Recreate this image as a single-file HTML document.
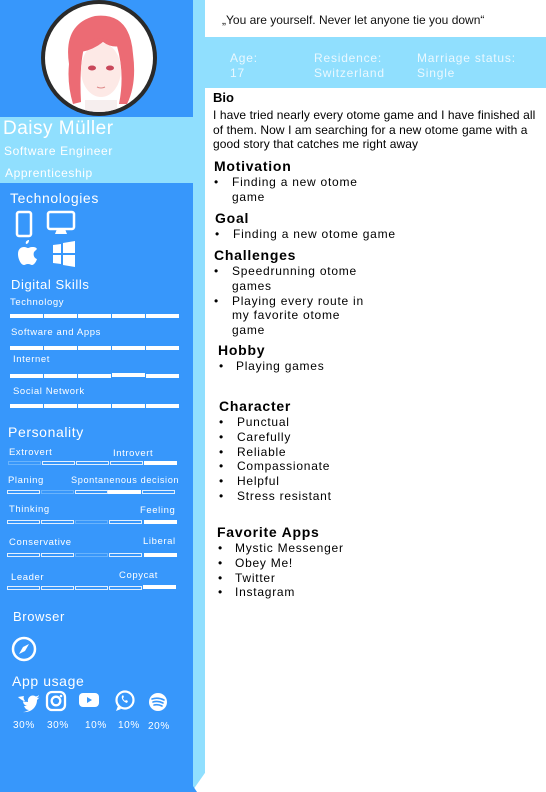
<!DOCTYPE html>
<html><head><meta charset="utf-8"><style>
*{margin:0;padding:0;box-sizing:border-box}
body{width:546px;height:792px;position:relative;overflow:hidden;background:#fff;font-family:"Liberation Sans",sans-serif}
.a{position:absolute;white-space:nowrap}
.w{color:#fff;letter-spacing:.6px}
.k{color:#000;letter-spacing:.75px}
.seg{position:absolute;height:4px;width:33px;background:#fff}
.o{background:#3797fb;border:1px solid #fff;opacity:.85}
.f{background:#fff}
.n{border:1px solid #69b3fc;background:#3797fb}
.s{font-size:9.5px}
</style></head><body>
<div class="a" style="left:0;top:0;width:193px;height:792px;background:#3797fb"></div>
<div class="a" style="left:193px;top:0;width:12px;height:792px;background:#90dffe"></div>
<svg class="a" style="left:193px;top:770px" width="14" height="22"><polygon points="14,0 14,22 0,22 0,20" fill="#fff"/><polygon points="0,16 4,22 0,22" fill="#3797fb"/></svg>
<div class="a" style="left:0;top:117px;width:205px;height:66px;background:#90dffe"></div>
<div class="a" style="left:205px;top:37px;width:341px;height:51px;background:#90dffe"></div>
<div class="a" style="left:41px;top:0;width:116px;height:116px;border-radius:50%;background:#2a2a2a"></div>
<div class="a" style="left:45px;top:4px;width:108px;height:108px;border-radius:50%;background:#fff;overflow:hidden">
<svg width="108" height="108"><path d="M24 60 Q18 20 50 12 Q85 8 88 50 Q92 80 82 100 L74 100 Q80 70 72 42 Q60 35 40 40 Q34 60 36 98 L28 100 Q22 80 24 60Z" fill="#ec6b74"/><ellipse cx="56" cy="66" rx="20" ry="27" fill="#fde9e6"/><path d="M36 40 Q55 28 76 42 Q66 44 58 38 Q48 46 36 48Z" fill="#ec6b74"/><ellipse cx="47" cy="64" rx="4" ry="2.5" fill="#c9475a"/><ellipse cx="65" cy="64" rx="4" ry="2.5" fill="#c9475a"/><path d="M52 83 Q56 85 60 83" stroke="#d88" fill="none"/><rect x="40" y="96" width="32" height="12" fill="#f6eeee"/></svg></div>
<div class="a" style="left:3px;top:118px;font-size:19px;color:#fff;letter-spacing:.5px">Daisy Müller</div>
<div class="a w" style="left:4px;top:144px;font-size:12px">Software Engineer</div>
<div class="a w" style="left:5px;top:166px;font-size:12px">Apprenticeship</div>
<div class="a w" style="left:10px;top:190px;font-size:14px">Technologies</div>
<svg class="a" style="left:14px;top:210px" width="64" height="58" fill="#fff">
<rect x="3" y="2" width="14" height="24" rx="2" fill="none" stroke="#fff" stroke-width="2.5"/>
<rect x="34" y="2" width="26" height="17" rx="2" fill="none" stroke="#fff" stroke-width="2.5"/><path d="M43 19h8l2 5h-12z"/>
<path d="M12 34c2 0 3-2 3-4-2 0-4 2-3 4zM10 37c-3 0-6 2-6 7 0 5 3 11 6 11 1 0 2-1 4-1s3 1 4 1c2 0 4-3 5-6-3-1-4-4-3-7 1-1 2-2 3-3-1-2-3-2-5-2-2 0-3 1-4 1s-2-1-4-1z"/>
<path d="M39 35l8-1v9h-8zM49 33l12-2v12h-12zM39 45h8v9l-8-1zM49 45h12v12l-12-2z"/></svg>
<div class="a w" style="left:11px;top:277px;font-size:13px">Digital Skills</div>
<div class="a w s" style="left:10px;top:297px">Technology</div>
<div class="a w s" style="left:11px;top:327px">Software and Apps</div>
<div class="a w s" style="left:13px;top:354px">Internet</div>
<div class="a w s" style="left:13px;top:386px">Social Network</div>
<div class="a w" style="left:8px;top:424px;font-size:14px">Personality</div>
<div class="a w s" style="left:9px;top:447px">Extrovert</div><div class="a w s" style="left:113px;top:448px">Introvert</div>
<div class="a w s" style="left:8px;top:475px">Planing</div><div class="a w s" style="left:71px;top:475px;font-size:9.2px">Spontanenous decision</div>
<div class="a w s" style="left:9px;top:504px">Thinking</div><div class="a w s" style="left:140px;top:505px">Feeling</div>
<div class="a w s" style="left:9px;top:537px">Conservative</div><div class="a w s" style="left:143px;top:536px">Liberal</div>
<div class="a w s" style="left:11px;top:572px">Leader</div><div class="a w s" style="left:119px;top:570px">Copycat</div>
<div class="a w" style="left:13px;top:609px;font-size:13px">Browser</div>
<svg class="a" style="left:11px;top:636px" width="26" height="26"><circle cx="13" cy="13" r="11" fill="none" stroke="#fff" stroke-width="2.5"/><path d="M18 8l-4 7-6 3 4-7z" fill="#fff"/></svg>
<div class="a w" style="left:12px;top:673px;font-size:14px">App usage</div>
<svg class="a" style="left:16px;top:690px" width="156" height="24" fill="#fff">
<path d="M2 7c3 3 7 5 10 5-1-4 3-8 7-6 1 1 3 0 4-1 0 1-1 2-2 3 1 0 2 0 3-1-1 1-2 2-3 3 0 7-6 13-14 12 2 0 4-1 6-2-3 0-4-2-5-4 1 0 2 0 3 0-3-1-4-3-4-5 1 1 2 1 3 1-2-2-3-4-2-6z"/>
<rect x="31" y="2" width="18" height="18" rx="5" fill="none" stroke="#fff" stroke-width="2.3"/><circle cx="40" cy="11" r="4.3" fill="none" stroke="#fff" stroke-width="2.3"/><circle cx="45" cy="6" r="1.3"/>
<rect x="63" y="3" width="20" height="14" rx="4"/><path d="M71 7v6l5-3z" fill="#3797fb"/>
<circle cx="109" cy="10" r="8.5" fill="none" stroke="#fff" stroke-width="2.2"/><path d="M100 21l2-5 3 3z"/><path d="M106 6c-1 2 1 6 5 7l1-2-2-1-1 1c-1-1-2-2-2-3l1-1-1-2z"/>
<circle cx="142" cy="12" r="9"/><path d="M136 9q6-2 12 1M137 12q5-1.5 10 1M138 15q4-1 8 1" stroke="#3797fb" stroke-width="1.6" fill="none" stroke-linecap="round"/></svg>
<div class="a w" style="left:13px;top:720px;font-size:10px">30%</div>
<div class="a w" style="left:47px;top:720px;font-size:10px">30%</div>
<div class="a w" style="left:85px;top:720px;font-size:10px">10%</div>
<div class="a w" style="left:118px;top:720px;font-size:10px">10%</div>
<div class="a w" style="left:148px;top:721px;font-size:10px">20%</div>
<div class="a" style="left:222px;top:13px;font-size:12px;color:#111">„You are yourself. Never let anyone tie you down“</div>
<div class="a" style="left:230px;top:51px;font-size:12px;color:#eaf8ff;letter-spacing:.8px;line-height:15px">Age:<br>17</div>
<div class="a" style="left:314px;top:51px;font-size:12px;color:#eaf8ff;letter-spacing:.8px;line-height:15px">Residence:<br>Switzerland</div>
<div class="a" style="left:417px;top:51px;font-size:12px;color:#eaf8ff;letter-spacing:.8px;line-height:15px">Marriage status:<br>Single</div>
<div class="a" style="left:213px;top:90px;font-size:13px;font-weight:bold">Bio</div>
<div class="a" style="left:213px;top:108px;font-size:12px;line-height:14.5px;color:#000;letter-spacing:.08px">I have tried nearly every otome game and I have finished all<br>of them. Now I am searching for a new otome game with a<br>good story that catches me right away</div>
<div class="a k" style="left:214px;top:158px;font-size:14px;font-weight:bold">Motivation</div>
<div class="a k" style="left:214px;top:175px;font-size:12px;line-height:15px">•<br>&nbsp;</div><div class="a k" style="left:232px;top:175px;font-size:12px;line-height:15px">Finding a new otome<br>game</div>
<div class="a k" style="left:215px;top:210px;font-size:14px;font-weight:bold">Goal</div>
<div class="a k" style="left:215px;top:227px;font-size:12px">•</div><div class="a k" style="left:233px;top:227px;font-size:12px">Finding a new otome game</div>
<div class="a k" style="left:214px;top:247px;font-size:14px;font-weight:bold">Challenges</div>
<div class="a k" style="left:214px;top:264px;font-size:12px;line-height:14.8px">•<br><br>•</div><div class="a k" style="left:232px;top:264px;font-size:12px;line-height:14.8px">Speedrunning otome<br>games<br>Playing every route in<br>my favorite otome<br>game</div>
<div class="a k" style="left:218px;top:342px;font-size:14px;font-weight:bold">Hobby</div>
<div class="a k" style="left:219px;top:359px;font-size:12px">•</div><div class="a k" style="left:236px;top:359px;font-size:12px">Playing games</div>
<div class="a k" style="left:219px;top:398px;font-size:14px;font-weight:bold">Character</div>
<div class="a k" style="left:219px;top:415px;font-size:12px;line-height:14.8px">•<br>•<br>•<br>•<br>•<br>•</div><div class="a k" style="left:237px;top:415px;font-size:12px;line-height:14.8px">Punctual<br>Carefully<br>Reliable<br>Compassionate<br>Helpful<br>Stress resistant</div>
<div class="a k" style="left:217px;top:524px;font-size:14px;font-weight:bold">Favorite Apps</div>
<div class="a k" style="left:218px;top:541px;font-size:12px;line-height:14.8px">•<br>•<br>•<br>•</div><div class="a k" style="left:235px;top:541px;font-size:12px;line-height:14.8px">Mystic Messenger<br>Obey Me!<br>Twitter<br>Instagram</div>
<div class="seg" style="left:10px;top:314px"></div><div class="seg" style="left:44px;top:314px"></div><div class="seg" style="left:78px;top:314px"></div><div class="seg" style="left:112px;top:314px"></div><div class="seg" style="left:146px;top:314px"></div>
<div class="seg" style="left:10px;top:346px"></div><div class="seg" style="left:44px;top:346px"></div><div class="seg" style="left:78px;top:346px"></div><div class="seg" style="left:112px;top:346px"></div><div class="seg" style="left:146px;top:346px"></div>
<div class="seg" style="left:10px;top:374px"></div><div class="seg" style="left:44px;top:374px"></div><div class="seg" style="left:78px;top:374px"></div><div class="seg" style="left:112px;top:373px"></div><div class="seg" style="left:146px;top:374px"></div>
<div class="seg" style="left:10px;top:404px"></div><div class="seg" style="left:44px;top:404px"></div><div class="seg" style="left:78px;top:404px"></div><div class="seg" style="left:112px;top:404px"></div><div class="seg" style="left:146px;top:404px"></div>
<div class="seg n" style="left:8px;top:461px"></div><div class="seg o" style="left:42px;top:461px"></div><div class="seg o" style="left:76px;top:461px"></div><div class="seg o" style="left:110px;top:461px"></div><div class="seg f" style="left:144px;top:461px"></div>
<div class="seg o" style="left:7px;top:490px"></div><div class="seg n" style="left:41px;top:490px"></div><div class="seg o" style="left:75px;top:490px"></div><div class="seg f" style="left:108px;top:490px"></div><div class="seg o" style="left:142px;top:490px"></div>
<div class="seg o" style="left:7px;top:520px"></div><div class="seg o" style="left:41px;top:520px"></div><div class="seg n" style="left:75px;top:520px"></div><div class="seg o" style="left:109px;top:520px"></div><div class="seg f" style="left:144px;top:520px"></div>
<div class="seg o" style="left:7px;top:553px"></div><div class="seg o" style="left:41px;top:553px"></div><div class="seg n" style="left:75px;top:553px"></div><div class="seg o" style="left:109px;top:553px"></div><div class="seg f" style="left:144px;top:553px"></div>
<div class="seg o" style="left:7px;top:586px"></div><div class="seg o" style="left:41px;top:586px"></div><div class="seg o" style="left:75px;top:586px"></div><div class="seg o" style="left:109px;top:586px"></div><div class="seg f" style="left:143px;top:585px"></div>
</body></html>
